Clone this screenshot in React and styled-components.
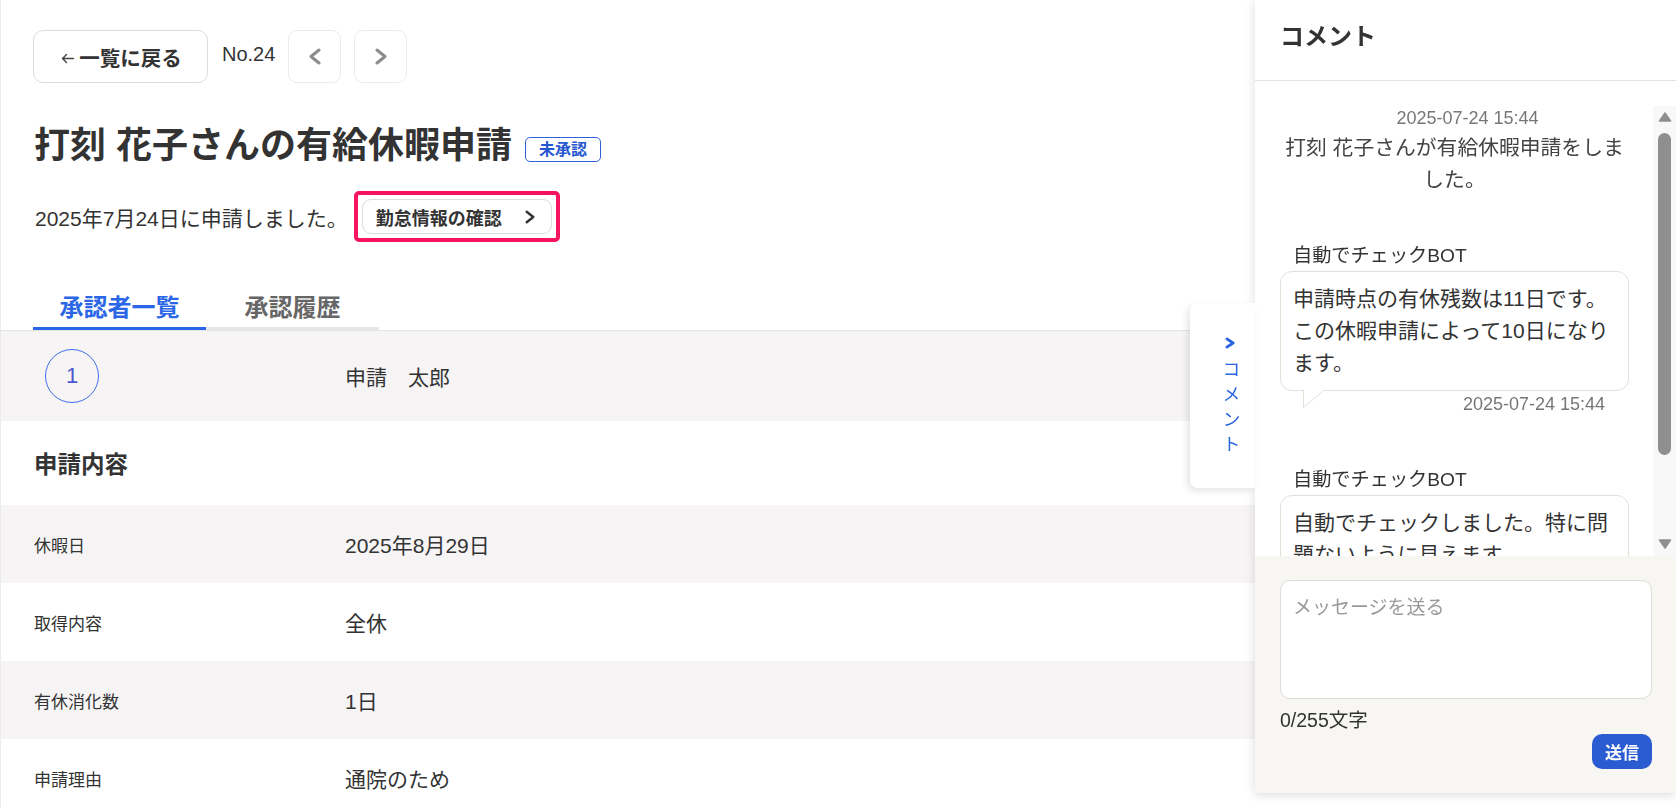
import React from "react";
import styled, { createGlobalStyle } from "styled-components";

const GlobalStyle = createGlobalStyle`
  * { box-sizing: border-box; }
  html, body {
    margin: 0;
    padding: 0;
    overflow: hidden;
    background: #fff;
  }
  body {
    font-family: "Liberation Sans", "Noto Sans CJK JP", sans-serif;
    color: #333;
  }
`;

const details = [
  { label: "休暇日", value: "2025年8月29日" },
  { label: "取得内容", value: "全休" },
  { label: "有休消化数", value: "1日" },
  { label: "申請理由", value: "通院のため" },
];

// simple open chevron, drawn to the given box
const Chevron = ({ dir = "right", color = "#8c8c8c", w = 12, h = 17, weight = 3 }) => {
  const p = weight / 2 + 0.5;
  const points =
    dir === "right"
      ? `${p},${p} ${w - p},${h / 2} ${p},${h - p}`
      : `${w - p},${p} ${p},${h / 2} ${w - p},${h - p}`;
  return (
    <svg width={w} height={h} viewBox={`0 0 ${w} ${h}`} fill="none">
      <polyline
        points={points}
        stroke={color}
        strokeWidth={weight}
        strokeLinecap="round"
        strokeLinejoin="round"
      />
    </svg>
  );
};

const BackArrow = () => (
  <svg width="13" height="11" viewBox="0 0 13 11" fill="none">
    <path
      d="M12.5 5.5H1.5M5.5 1.5L1.5 5.5L5.5 9.5"
      stroke="#444"
      strokeWidth="1.4"
      strokeLinecap="round"
      strokeLinejoin="round"
    />
  </svg>
);

const ScrollArrow = ({ down }) => (
  <svg width="14" height="10" viewBox="0 0 14 10">
    <polygon
      points={down ? "1.5,1 12.5,1 7,9" : "1.5,9 12.5,9 7,1"}
      fill="#8f8f8f"
      stroke="#8f8f8f"
      strokeWidth="1.5"
      strokeLinejoin="round"
    />
  </svg>
);

const App = () => {
  return (
    <>
      <GlobalStyle />
      <Page>
        <Header>
          <Toolbar>
            <BackButton>
              <BackArrow />
              一覧に戻る
            </BackButton>
            <RecordNo>No.24</RecordNo>
            <NavButton>
              <Chevron dir="left" />
            </NavButton>
            <NavButton>
              <Chevron />
            </NavButton>
          </Toolbar>
          <TitleRow>
            <Title>打刻 花子さんの有給休暇申請</Title>
            <Badge>未承認</Badge>
          </TitleRow>
          <SubRow>
            <AppliedAt>2025年7月24日に申請しました。</AppliedAt>
            <Highlight>
              <LinkButton>
                勤怠情報の確認
                <Chevron color="#333" w={10} h={14} weight={2.4} />
              </LinkButton>
            </Highlight>
          </SubRow>
        </Header>

        <TabBar>
          <Tab $active>承認者一覧</Tab>
          <Tab>承認履歴</Tab>
        </TabBar>

        <ApproverRow>
          <StepCircle>1</StepCircle>
          <ApproverName>申請　太郎</ApproverName>
        </ApproverRow>

        <SectionTitle>申請内容</SectionTitle>

        {details.map((d, i) => (
          <DetailRow key={d.label} $shaded={i % 2 === 0}>
            <DetailLabel>{d.label}</DetailLabel>
            <DetailValue>{d.value}</DetailValue>
          </DetailRow>
        ))}
      </Page>

      <Panel>
        <PanelToggle>
          <Chevron color="#2a63e0" w={10} h={12} weight={2.8} />
          <ToggleLabel>コメント</ToggleLabel>
        </PanelToggle>

        <PanelHeader>コメント</PanelHeader>

        <MessageArea>
          <MessageList>
            <SystemMessage>
              <Stamp>2025-07-24 15:44</Stamp>
              <SystemText>
                打刻 花子さんが有給休暇申請をしま
                <br />
                した。
              </SystemText>
            </SystemMessage>

            <BotMessage $first>
              <SenderName>自動でチェックBOT</SenderName>
              <Bubble>
                申請時点の有休残数は11日です。
                <br />
                この休暇申請によって10日になり
                <br />
                ます。
                <Tail width="22" height="19" viewBox="0 0 22 19">
                  <polygon points="1,0 1,17.5 22,0" fill="#fff" />
                  <path d="M1.5 0V17.5L21 1" stroke="#e3e0d8" strokeWidth="1" fill="none" />
                </Tail>
              </Bubble>
              <BubbleTime>2025-07-24 15:44</BubbleTime>
            </BotMessage>

            <BotMessage>
              <SenderName>自動でチェックBOT</SenderName>
              <Bubble>
                自動でチェックしました。特に問
                <br />
                題ないように見えます。
              </Bubble>
            </BotMessage>
          </MessageList>

          <ScrollTrack>
            <ScrollArrow />
            <ScrollThumb />
            <TrackSpacer />
            <ScrollArrow down />
          </ScrollTrack>
        </MessageArea>

        <Composer>
          <MessageInput placeholder="メッセージを送る" />
          <Counter>0/255文字</Counter>
          <SendButton>送信</SendButton>
        </Composer>
      </Panel>
    </>
  );
};

export default App;

const Page = styled.div`
  min-height: 808px;
  border-left: 1px solid #ececec;
`;

const Header = styled.div`
  padding: 30px 0 0 32px;
`;

const Toolbar = styled.div`
  display: flex;
  align-items: center;
  height: 53px;
`;

const BackButton = styled.button`
  width: 175px;
  height: 53px;
  display: flex;
  align-items: center;
  justify-content: center;
  gap: 5px;
  border: 1px solid #dcdcdc;
  border-radius: 10px;
  background: #fff;
  font-family: inherit;
  font-size: 20.5px;
  font-weight: 700;
  color: #333;
  padding: 0 0 0 2px;

  svg {
    margin-top: 4px;
  }
`;

const RecordNo = styled.span`
  margin: 0 13px 4px 14px;
  font-size: 20px;
  color: #333;
`;

const NavButton = styled.button`
  width: 53px;
  height: 53px;
  margin-right: 13px;
  display: flex;
  align-items: center;
  justify-content: center;
  border: 1px solid #ebebeb;
  border-radius: 9px;
  background: #fff;
  padding: 0;
`;

const TitleRow = styled.div`
  display: flex;
  align-items: center;
  gap: 13px;
  margin-top: 41px;
`;

const Title = styled.h1`
  margin: 0;
  font-size: 36px;
  line-height: 44px;
  font-weight: 700;
  color: #333;
  padding-left: 1px;
`;

const Badge = styled.span`
  height: 25px;
  padding: 0 13px;
  margin-top: 6px;
  border: 1px solid #2f62d8;
  border-radius: 5px;
  font-size: 16px;
  line-height: 23px;
  font-weight: 700;
  color: #2457d0;
`;

const SubRow = styled.div`
  display: flex;
  align-items: center;
  gap: 6px;
  margin-top: 23px;
`;

const AppliedAt = styled.span`
  font-size: 21px;
  color: #333;
  padding-left: 2px;
`;

const Highlight = styled.div`
  border: 4px solid #f5145d;
  border-radius: 5px;
  padding: 4px;
`;

const LinkButton = styled.button`
  width: 190px;
  height: 35px;
  display: flex;
  align-items: center;
  justify-content: space-between;
  padding: 0 16px 0 13px;
  border: 1px solid #dcdcdc;
  border-radius: 9px;
  background: #fff;
  font-family: inherit;
  font-size: 18px;
  font-weight: 700;
  color: #333;
`;

const TabBar = styled.div`
  display: flex;
  margin-top: 38px;
  padding-left: 32px;
  border-bottom: 1px solid #e4e2e3;
`;

const Tab = styled.div`
  width: 173px;
  height: 50px;
  padding-top: 3px;
  display: flex;
  align-items: center;
  justify-content: center;
  font-size: 24px;
  font-weight: 700;
  color: ${({ $active }) => ($active ? "#2a66e6" : "#666")};
  border-bottom: 3px solid ${({ $active }) => ($active ? "#2a66e6" : "#e8e7e8")};
`;

const ApproverRow = styled.div`
  height: 90px;
  display: grid;
  grid-template-columns: 312px 1fr;
  align-items: center;
  padding-left: 32px;
  background: #f6f4f5;
`;

const StepCircle = styled.div`
  width: 54px;
  height: 54px;
  margin-left: 12px;
  display: flex;
  align-items: center;
  justify-content: center;
  border: 1px solid #3d70e6;
  border-radius: 50%;
  font-size: 22px;
  color: #4a58d0;
`;

const ApproverName = styled.span`
  font-size: 21px;
  color: #333;
`;

const SectionTitle = styled.h2`
  margin: 0;
  height: 84px;
  display: flex;
  align-items: center;
  padding-left: 33px;
  font-size: 23.5px;
  font-weight: 700;
  color: #333;
`;

const DetailRow = styled.div`
  height: 78px;
  display: grid;
  grid-template-columns: 312px 1fr;
  align-items: center;
  padding-left: 33px;
  background: ${({ $shaded }) => ($shaded ? "#f6f4f5" : "#fff")};
`;

const DetailLabel = styled.span`
  font-size: 17px;
  color: #333;
`;

const DetailValue = styled.span`
  font-size: 21px;
  color: #333;
  margin-left: -1px;
`;

const Panel = styled.aside`
  position: fixed;
  top: 0;
  right: 0;
  width: 421px;
  height: 793px;
  display: flex;
  flex-direction: column;
  background: #fff;
  box-shadow: 0 2px 10px rgba(0, 0, 0, 0.14);
  z-index: 10;
`;

const PanelToggle = styled.div`
  position: absolute;
  right: 100%;
  top: 303px;
  width: 65px;
  height: 185px;
  display: flex;
  flex-direction: column;
  align-items: center;
  padding: 34px 0 0 14px;
  background: #fff;
  border-radius: 8px 0 0 8px;
  box-shadow: -3px 3px 7px rgba(0, 0, 0, 0.1);
`;

const ToggleLabel = styled.span`
  writing-mode: vertical-rl;
  margin-top: 11px;
  font-size: 18px;
  letter-spacing: 7px;
  color: #2a63e0;
`;

const PanelHeader = styled.div`
  flex: none;
  height: 81px;
  padding: 20px 25px 0;
  line-height: 34px;
  border-bottom: 1px solid #e2e2e2;
  font-size: 24px;
  font-weight: 700;
  color: #333;
`;

const MessageArea = styled.div`
  flex: 1;
  min-height: 0;
  display: flex;
  padding-top: 25px;
`;

const MessageList = styled.div`
  flex: 1;
  min-width: 0;
  overflow: hidden;
  padding: 0 24px 0 25px;
  font-size: 21px;
`;

const SystemMessage = styled.div`
  text-align: center;
`;

const Stamp = styled.div`
  padding-left: 26px;
  font-size: 18px;
  line-height: 24px;
  color: #777;
`;

const SystemText = styled.div`
  margin: 2px -12px 0;
  font-size: 20.8px;
  line-height: 32px;
  white-space: nowrap;
  color: #444;
`;

const BotMessage = styled.div`
  margin-top: ${({ $first }) => ($first ? "46px" : "50px")};
`;

const SenderName = styled.div`
  padding-left: 13px;
  font-size: 19.2px;
  line-height: 28px;
  color: #333;
`;

const Bubble = styled.div`
  position: relative;
  margin-top: 1px;
  padding: 11px 10px 11px 12px;
  border: 1px solid #e3e0d8;
  border-radius: 12px;
  line-height: 32px;
  white-space: nowrap;
  color: #333;
  background: #fff;
`;

const Tail = styled.svg`
  position: absolute;
  top: 100%;
  left: 21px;
`;

const BubbleTime = styled.div`
  margin-top: 1px;
  padding-right: 24px;
  text-align: right;
  font-size: 18px;
  line-height: 24px;
  color: #777;
`;

const ScrollTrack = styled.div`
  flex: none;
  width: 23px;
  display: flex;
  flex-direction: column;
  align-items: center;
  padding: 6px 0 7px;
  background: #f8f8f8;
`;

const ScrollThumb = styled.div`
  width: 13px;
  height: 322px;
  margin-top: 11px;
  border-radius: 7px;
  background: #8f8f8f;
`;

const TrackSpacer = styled.div`
  flex: 1;
`;

const Composer = styled.div`
  flex: none;
  height: 237px;
  display: flex;
  flex-direction: column;
  padding: 24px 24px 24px 25px;
  background: #f7f6f3;
`;

const MessageInput = styled.textarea`
  display: block;
  width: 100%;
  height: 119px;
  padding: 13px 12px;
  border: 1px solid #dcdcdc;
  border-radius: 10px;
  background: #fff;
  resize: none;
  outline: none;
  font-family: inherit;
  font-size: 19px;
  line-height: 28px;
  color: #333;

  &::placeholder {
    color: #9a9a9a;
  }
`;

const Counter = styled.div`
  margin-top: 9px;
  font-size: 19.5px;
  line-height: 24px;
  color: #333;
`;

const SendButton = styled.button`
  align-self: flex-end;
  width: 60px;
  height: 35px;
  margin-top: 2px;
  border: none;
  border-radius: 10px;
  background: #2b5bd0;
  color: #fff;
  font-family: inherit;
  font-size: 17px;
  font-weight: 700;
  padding: 0;
`;
